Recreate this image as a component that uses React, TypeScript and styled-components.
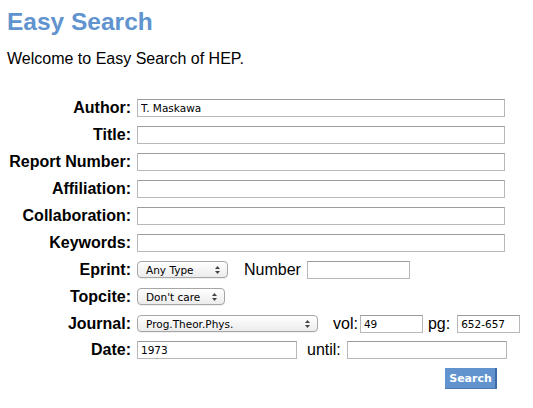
import styled, { createGlobalStyle } from 'styled-components';

const GlobalStyle = createGlobalStyle`
	body {
		margin: 0;
		background: #fff;
		font-family: 'Liberation Sans', Arial, sans-serif;
		color: #000;
	}
`;

const Page = styled.div`
	padding: 7px 7px 0;
`;

const Title = styled.h1`
	margin: 0;
	font-size: 24.5px;
	line-height: 30px;
	font-weight: bold;
	color: #6194cf;
`;

const Welcome = styled.p`
	margin: 13px 0 0;
	font-size: 16px;
	line-height: 18px;
`;

const Form = styled.div`
	margin-top: 27px;
	display: grid;
	grid-template-columns: 124px auto;
	grid-auto-rows: 26.9px;
	column-gap: 6px;
	align-items: center;
`;

const Label = styled.label`
	font-size: 16px;
	font-weight: bold;
	text-align: right;
	white-space: nowrap;
`;

const Cell = styled.div<{ $end?: boolean }>`
	display: flex;
	align-items: center;
	justify-content: ${(p) => (p.$end ? 'flex-end' : 'flex-start')};
	width: ${(p) => (p.$end ? '360px' : 'auto')};
`;

const Field = styled.input<{ $w: number }>`
	box-sizing: border-box;
	width: ${(p) => p.$w}px;
	height: 18px;
	margin: 0;
	padding: 0 3px;
	border: 1px solid #b8b8b8;
	border-top-color: #9c9c9c;
	border-radius: 0;
	background: #fff;
	font-family: 'DejaVu Sans', sans-serif;
	font-size: 10.5px;
	color: #000;
	outline: none;
`;

const InlineText = styled.span<{ $l: number; $r: number }>`
	font-size: 16px;
	margin-left: ${(p) => p.$l}px;
	margin-right: ${(p) => p.$r}px;
	white-space: nowrap;
`;

const SelectBox = styled.div<{ $w: number }>`
	position: relative;
	box-sizing: border-box;
	width: ${(p) => p.$w}px;
	height: 17px;
	border: 1px solid #a6a6a6;
	border-radius: 4px;
	background: linear-gradient(#ffffff, #ececec);
	box-shadow: 0 1px 0 rgba(0, 0, 0, 0.06);
	display: flex;
	align-items: center;
`;

const SelectInput = styled.select`
	appearance: none;
	-webkit-appearance: none;
	border: none;
	background: transparent;
	width: 100%;
	height: 100%;
	padding: 0 0 0 8px;
	margin: 0;
	font-family: 'DejaVu Sans', sans-serif;
	font-size: 10.5px;
	color: #000;
	outline: none;
`;

const Arrows = styled.svg`
	position: absolute;
	right: 7px;
	top: 4px;
	pointer-events: none;
`;

const SearchButton = styled.button`
	box-sizing: border-box;
	width: 52px;
	height: 21px;
	margin: 3px 0 0 0;
	padding: 0 0 0 1px;
	border: none;
	border-right: 2px solid #3c6ba3;
	border-bottom: 1px solid #4a78af;
	background: #6194cf;
	color: #fff;
	font-family: 'DejaVu Sans', sans-serif;
	font-weight: bold;
	font-size: 11px;
	cursor: pointer;
`;

function Select({ w, value }: { w: number; value: string }) {
	return (
		<SelectBox $w={w}>
			<SelectInput defaultValue={value}>
				<option>{value}</option>
			</SelectInput>
			<Arrows width="5" height="8" viewBox="0 0 5 8">
				<path d="M2.5 0 L5 3 L0 3 Z" fill="#444" />
				<path d="M2.5 8 L5 5 L0 5 Z" fill="#444" />
			</Arrows>
		</SelectBox>
	);
}

const textRows = [
	{ label: 'Author', value: 'T. Maskawa' },
	{ label: 'Title', value: '' },
	{ label: 'Report Number', value: '' },
	{ label: 'Affiliation', value: '' },
	{ label: 'Collaboration', value: '' },
	{ label: 'Keywords', value: '' },
];

export default function App() {
	return (
		<Page>
			<GlobalStyle />
			<Title>Easy Search</Title>
			<Welcome>Welcome to Easy Search of HEP.</Welcome>
			<Form>
				{textRows.map((r) => (
					<>
						<Label key={r.label + 'l'}>{r.label}:</Label>
						<Cell key={r.label + 'c'}>
							<Field $w={368} defaultValue={r.value} />
						</Cell>
					</>
				))}
				<Label>Eprint:</Label>
				<Cell>
					<Select w={91} value="Any Type" />
					<InlineText $l={16} $r={6}>
						Number
					</InlineText>
					<Field $w={103} />
				</Cell>
				<Label>Topcite:</Label>
				<Cell>
					<Select w={88} value="Don't care" />
				</Cell>
				<Label>Journal:</Label>
				<Cell>
					<Select w={181} value="Prog.Theor.Phys." />
					<InlineText $l={15} $r={2}>
						vol:
					</InlineText>
					<Field $w={63} defaultValue="49" />
					<InlineText $l={5} $r={7}>
						pg:
					</InlineText>
					<Field $w={63} defaultValue="652-657" />
				</Cell>
				<Label>Date:</Label>
				<Cell>
					<Field $w={160} defaultValue="1973" />
					<InlineText $l={10} $r={6}>
						until:
					</InlineText>
					<Field $w={160} />
				</Cell>
				<span />
				<Cell $end>
					<SearchButton>Search</SearchButton>
				</Cell>
			</Form>
		</Page>
	);
}
